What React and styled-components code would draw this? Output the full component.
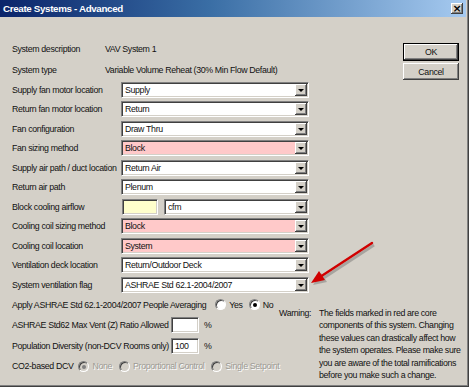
import React from "react";
import styled, { createGlobalStyle } from "styled-components";

const GlobalStyle = createGlobalStyle`
  html, body {
    margin: 0;
    padding: 0;
    background: #d4d0c8;
  }
  body {
    font-family: "Liberation Sans", Arial, sans-serif;
    font-size: 8.8px;
    letter-spacing: -0.35px;
    color: #111;
  }
`;

const fieldRows = [
  { label: "Supply fan motor location", value: "Supply" },
  { label: "Return fan motor location", value: "Return" },
  { label: "Fan configuration", value: "Draw Thru" },
  { label: "Fan sizing method", value: "Block", core: true },
  { label: "Supply air path / duct location", value: "Return Air" },
  { label: "Return air path", value: "Plenum" },
  { label: "Block cooling airflow", value: "cfm", airflow: true },
  { label: "Cooling coil sizing method", value: "Block", core: true },
  { label: "Cooling coil location", value: "System", core: true },
  { label: "Ventilation deck location", value: "Return/Outdoor Deck" },
  { label: "System ventilation flag", value: "ASHRAE Std 62.1-2004/2007" },
];

const warningLines = [
  "The fields marked in red are core",
  "components of this system.  Changing",
  "these values can drastically affect how",
  "the system operates. Please make sure",
  "you are aware of the total ramifications",
  "before you make such a change.",
];

const Select = ({ value, core, width }) => (
  <SelectBox $core={core} $width={width}>
    <SelectText>{value}</SelectText>
    <DropButton>
      <DropTriangle />
    </DropButton>
  </SelectBox>
);

const App = () => {
  return (
    <>
      <GlobalStyle />
      <Window>
        <TitleBar>
          <Title>Create Systems - Advanced</Title>
          <CloseButton>×</CloseButton>
        </TitleBar>

        <Top>
          <Form>
            <InfoRow>
              <InfoLabel>System description</InfoLabel>
              <span>VAV System 1</span>
            </InfoRow>
            <InfoRow>
              <InfoLabel>System type</InfoLabel>
              <span>Variable Volume Reheat (30% Min Flow Default)</span>
            </InfoRow>
            {fieldRows.map((row) => (
              <FieldRow key={row.label}>
                <FieldLabel>{row.label}</FieldLabel>
                {row.airflow ? (
                  <AirflowGroup>
                    <TextBox $width={36} $bg="#ffffcc" />
                    <Select value={row.value} width={145} />
                  </AirflowGroup>
                ) : (
                  <Select value={row.value} core={row.core} width={188} />
                )}
              </FieldRow>
            ))}
          </Form>

          <Buttons>
            <DialogButton $default>OK</DialogButton>
            <DialogButton>Cancel</DialogButton>
          </Buttons>
        </Top>

        <Bottom>
          <Options>
            <OptionRow $h={20}>
              <span>Apply ASHRAE Std 62.1-2004/2007 People Averaging</span>
              <RadioItem $first={9}>
                <Radio />
                <span>Yes</span>
              </RadioItem>
              <RadioItem $first={6}>
                <Radio $checked />
                <span>No</span>
              </RadioItem>
            </OptionRow>
            <OptionRow $h={21}>
              <WideLabel>ASHRAE Std62 Max Vent (Z) Ratio Allowed</WideLabel>
              <TextBox $width={28} $h={16} />
              <Percent>%</Percent>
            </OptionRow>
            <OptionRow $h={20}>
              <WideLabel>Population Diversity (non-DCV Rooms only)</WideLabel>
              <TextBox $width={28} $h={16}>100</TextBox>
              <Percent>%</Percent>
            </OptionRow>
            <OptionRow $h={21}>
              <span>CO2-based DCV</span>
              <RadioItem $first={5}>
                <Radio $checked $disabled />
                <Disabled>None</Disabled>
              </RadioItem>
              <RadioItem $first={7}>
                <Radio $disabled />
                <Disabled>Proportional Control</Disabled>
              </RadioItem>
              <RadioItem $first={7}>
                <Radio $disabled />
                <Disabled>Single Setpoint</Disabled>
              </RadioItem>
            </OptionRow>
          </Options>

          <Warning>
            <WarningLabel>Warning:</WarningLabel>
            <WarningText>
              {warningLines.map((line) => (
                <div key={line}>{line}</div>
              ))}
            </WarningText>
          </Warning>
        </Bottom>

        <Annotation viewBox="0 0 469 387" width="469" height="387">
          <g opacity="0.35" transform="translate(2 2)">
            <line x1="372" y1="243" x2="320" y2="277" stroke="#555" strokeWidth="3" />
            <polygon points="311,283 325,280 319,271" fill="#555" />
          </g>
          <line x1="372" y1="243" x2="320" y2="277" stroke="#d00000" strokeWidth="2.4" strokeLinecap="round" />
          <polygon points="311,283 325,280 319,271" fill="#d00000" />
        </Annotation>
      </Window>
    </>
  );
};

const Window = styled.div`
  position: relative;
  width: 469px;
  height: 387px;
  box-sizing: border-box;
  background: #d4d0c8;
  border-right: 1px solid #404040;
  border-bottom: 1px solid #404040;
  box-shadow: inset -1px -1px #808080, inset -2px -2px #d4d0c8;
  overflow: hidden;
`;

const TitleBar = styled.div`
  height: 17px;
  display: flex;
  align-items: center;
  justify-content: space-between;
  padding: 0 3px 0 3px;
  margin-right: 2px;
  background: linear-gradient(to right, #0a246a 0%, #3a6ea5 45%, #a6caf0 100%);
`;

const Title = styled.span`
  font-family: "Liberation Sans", Arial, sans-serif;
  font-weight: bold;
  font-size: 9.8px;
  letter-spacing: -0.35px;
  color: #fff;
`;

const CloseButton = styled.span`
  width: 12px;
  height: 11px;
  display: flex;
  align-items: center;
  justify-content: center;
  background: #d4d0c8;
  font-family: "DejaVu Sans", sans-serif;
  font-weight: bold;
  font-size: 11px;
  letter-spacing: 0;
  line-height: 1;
  color: #000;
  box-shadow: inset -1px -1px #404040, inset 1px 1px #fff, inset -2px -2px #808080;
`;

const Top = styled.div`
  display: flex;
  justify-content: space-between;
  padding: 21px 9px 0 12px;
`;

const Form = styled.div`
  display: flex;
  flex-direction: column;
`;

const InfoRow = styled.div`
  height: 21px;
  display: flex;
  align-items: center;
`;

const InfoLabel = styled.span`
  width: 93px;
`;

const FieldRow = styled.div`
  height: 19.5px;
  display: flex;
  align-items: center;
`;

const FieldLabel = styled.span`
  width: 109px;
  white-space: nowrap;
`;

const AirflowGroup = styled.div`
  display: flex;
  gap: 6px;
  margin-left: 1px;
`;

const sunken = `
  box-sizing: border-box;
  border-top: 1px solid #808080;
  border-left: 1px solid #808080;
  border-bottom: 1px solid #fff;
  border-right: 1px solid #fff;
  box-shadow: inset 1px 1px #404040, inset -1px -1px #d4d0c8;
`;

const SelectBox = styled.div`
  ${sunken}
  width: ${(p) => p.$width}px;
  height: 16px;
  display: flex;
  align-items: stretch;
  padding: 1px;
  background: ${(p) => (p.$core ? "#ffc9c9" : "#fff")};
`;

const SelectText = styled.span`
  flex: 1;
  display: flex;
  align-items: center;
  padding-left: 2px;
  white-space: nowrap;
  overflow: hidden;
`;

const DropButton = styled.span`
  width: 12px;
  display: flex;
  align-items: center;
  justify-content: center;
  background: #d4d0c8;
  box-shadow: inset -1px -1px #404040, inset 1px 1px #fff, inset -2px -2px #808080;
`;

const DropTriangle = styled.span`
  width: 0;
  height: 0;
  border-left: 3px solid transparent;
  border-right: 3px solid transparent;
  border-top: 3px solid #000;
  margin-top: 1px;
`;

const TextBox = styled.div`
  ${sunken}
  width: ${(p) => p.$width}px;
  height: ${(p) => p.$h || 16}px;
  padding: 0 3px;
  display: flex;
  align-items: center;
  background: ${(p) => p.$bg || "#fff"};
`;

const Buttons = styled.div`
  display: flex;
  flex-direction: column;
  gap: 2px;
  padding-top: 5px;
`;

const DialogButton = styled.div`
  width: 56px;
  height: ${(p) => (p.$default ? 18 : 17)}px;
  box-sizing: border-box;
  display: flex;
  align-items: center;
  justify-content: center;
  background: #d4d0c8;
  border: ${(p) => (p.$default ? "1px solid #000" : "none")};
  box-shadow: inset -1px -1px #404040, inset 1px 1px #fff, inset -2px -2px #808080;
`;

const Bottom = styled.div`
  display: flex;
  padding-left: 12px;
`;

const Options = styled.div`
  width: 267px;
  display: flex;
  flex-direction: column;
`;

const OptionRow = styled.div`
  height: ${(p) => p.$h}px;
  display: flex;
  align-items: center;
  white-space: nowrap;
`;

const WideLabel = styled.span`
  width: 159px;
`;

const Percent = styled.span`
  margin-left: 5px;
`;

const RadioItem = styled.span`
  display: flex;
  align-items: center;
  gap: 3px;
  margin-left: ${(p) => p.$first}px;
`;

const Radio = styled.span`
  position: relative;
  width: 11px;
  height: 11px;
  box-sizing: border-box;
  border-radius: 50%;
  border: 1px solid;
  border-color: #808080 #fff #fff #808080;
  background: ${(p) => (p.$disabled ? "#d4d0c8" : "#fff")};
  box-shadow: inset 1px 1px #404040;

  &::after {
    content: "";
    display: ${(p) => (p.$checked ? "block" : "none")};
    position: absolute;
    left: 3px;
    top: 3px;
    width: 4px;
    height: 4px;
    border-radius: 50%;
    background: ${(p) => (p.$disabled ? "#808080" : "#000")};
  }
`;

const Disabled = styled.span`
  color: #9c9a94;
  text-shadow: 1px 1px #fff;
`;

const Warning = styled.div`
  display: flex;
  padding-top: 12px;
  line-height: 12.6px;
`;

const WarningLabel = styled.span`
  width: 40px;
`;

const WarningText = styled.div`
  white-space: nowrap;
`;

const Annotation = styled.svg`
  position: absolute;
  left: 0;
  top: 0;
  pointer-events: none;
`;

export default App;
